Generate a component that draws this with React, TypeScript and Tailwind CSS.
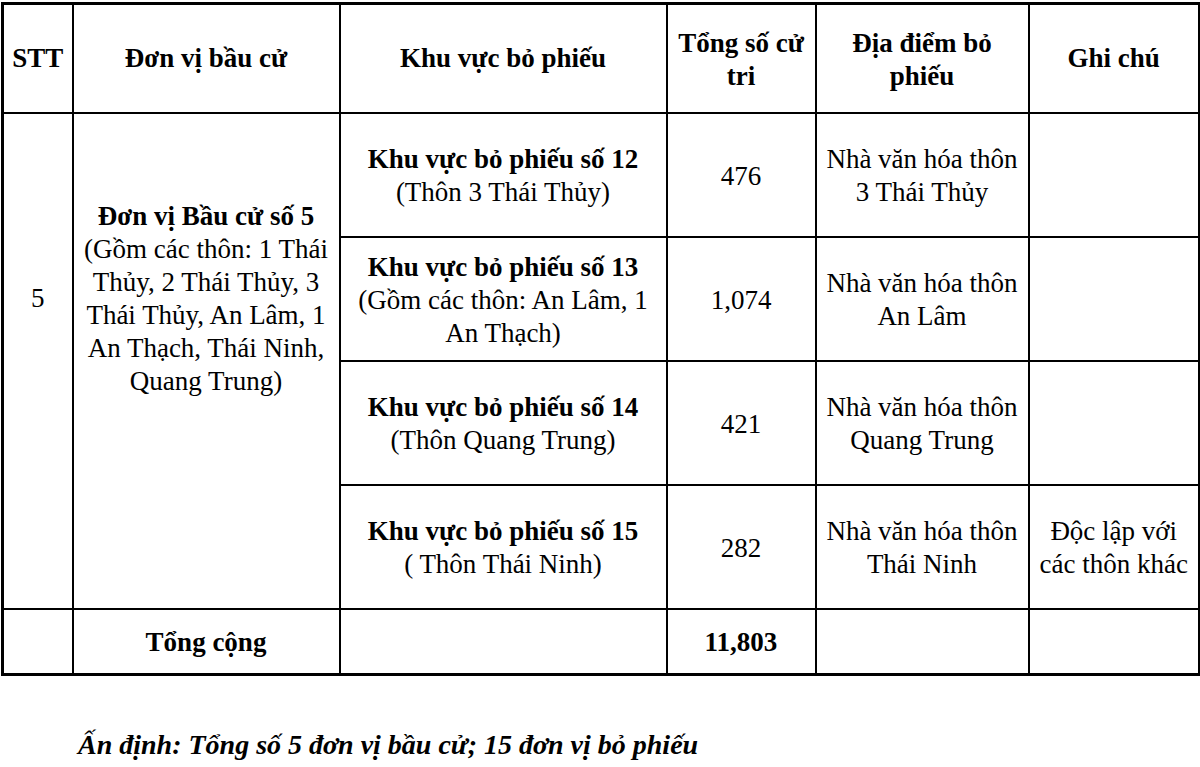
import React from "react";

const serif = { fontFamily: '"Liberation Serif", "Times New Roman", serif' };

const rows = [
  { bold: "Khu vực bỏ phiếu số 12", sub: "(Thôn 3 Thái Thủy)", n: "476", place: ["Nhà văn hóa thôn", "3 Thái Thủy"], note: null as null | string[] },
  { bold: "Khu vực bỏ phiếu số 13", sub: "(Gồm các thôn: An Lâm, 1|An Thạch)", n: "1,074", place: ["Nhà văn hóa thôn", "An Lâm"], note: null },
  { bold: "Khu vực bỏ phiếu số 14", sub: "(Thôn Quang Trung)", n: "421", place: ["Nhà văn hóa thôn", "Quang Trung"], note: null },
  { bold: "Khu vực bỏ phiếu số 15", sub: "( Thôn Thái Ninh)", n: "282", place: ["Nhà văn hóa thôn", "Thái Ninh"], note: ["Độc lập với", "các thôn khác"] },
];

export default function App() {
  const cell = "border-2 border-black text-center align-middle px-0";
  const bcell = `${cell} pt-[3px]`;
  return (
    <div className="w-[1200px] h-[767px] bg-white text-black overflow-hidden" style={serif}>
      <div className="pt-[2px] pl-[1px]">
        <table className="table-fixed border-collapse border-[3px] border-black w-[1197px] text-[27px] leading-[33px]">
          <colgroup>
            <col className="w-[70px]" />
            <col className="w-[267px]" />
            <col className="w-[327px]" />
            <col className="w-[149px]" />
            <col className="w-[213px]" />
            <col className="w-[171px]" />
          </colgroup>
          <thead>
            <tr className="h-[109px] font-bold">
              <th className={cell}>STT</th>
              <th className={cell}>Đơn vị bầu cử</th>
              <th className={cell}>Khu vực bỏ phiếu</th>
              <th className={`${cell} pt-[3px]`}>Tổng số cử<br />tri</th>
              <th className={`${cell} pt-[3px]`}>Địa điểm bỏ<br />phiếu</th>
              <th className={cell}>Ghi chú</th>
            </tr>
          </thead>
          <tbody>
            {rows.map((r, i) => (
              <tr key={i} className="h-[124px]">
                {i === 0 && (
                  <>
                    <td rowSpan={4} className={`${cell} pb-[124px]`}>5</td>
                    <td rowSpan={4} className={`${cell} pb-[124px] whitespace-nowrap`}>
                      <span className="font-bold">Đơn vị Bầu cử số 5</span>
                      <br />(Gồm các thôn: 1 Thái
                      <br />Thủy, 2 Thái Thủy, 3
                      <br />Thái Thủy, An Lâm, 1
                      <br />An Thạch, Thái Ninh,
                      <br />Quang Trung)
                    </td>
                  </>
                )}
                <td className={`${bcell} whitespace-nowrap`}>
                  <span className="font-bold">{r.bold}</span>
                  {r.sub.split("|").map((s, k) => (
                    <React.Fragment key={k}>
                      <br />
                      {s}
                    </React.Fragment>
                  ))}
                </td>
                <td className={bcell}>{r.n}</td>
                <td className={`${bcell} whitespace-nowrap`}>
                  {r.place[0]}
                  <br />
                  {r.place[1]}
                </td>
                <td className={`${bcell} whitespace-nowrap`}>
                  {r.note ? (
                    <>
                      {r.note[0]}
                      <br />
                      {r.note[1]}
                    </>
                  ) : null}
                </td>
              </tr>
            ))}
            <tr className="h-[66px] font-bold">
              <td className={cell}></td>
              <td className={bcell}>Tổng cộng</td>
              <td className={cell}></td>
              <td className={bcell}>11,803</td>
              <td className={cell}></td>
              <td className={cell}></td>
            </tr>
          </tbody>
        </table>
      </div>
      <div className="mt-[51px] pl-[78px] text-[28px] leading-[36px] font-bold italic">
        Ấn định: Tổng số 5 đơn vị bầu cử; 15 đơn vị bỏ phiếu
      </div>
    </div>
  );
}
